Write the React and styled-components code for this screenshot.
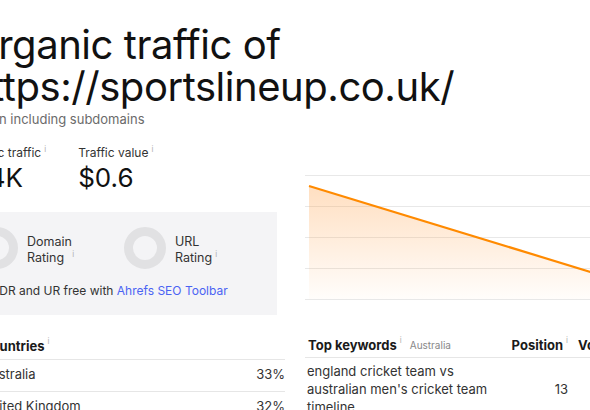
import React from "react";
import styled, { createGlobalStyle } from "styled-components";

const Global = createGlobalStyle`
  html, body { margin: 0; padding: 0; background: #fff; overflow: hidden; }
  body { font-family: Inter, "Noto Sans", "Liberation Sans", sans-serif; color: #1a1a1a; }
  * { box-sizing: border-box; }
`;

const Page = styled.div`
  margin-left: -40px;
  width: 670px;
  padding-top: 24px;
`;

const Title = styled.h1`
  margin: 0 0 0 8px;
  font-size: 40px;
  line-height: 42px;
  font-weight: 400;
  color: #111;
  letter-spacing: -0.45px;
`;

const Subtitle = styled.div`
  margin-top: 2px;
  font-size: 13px;
  line-height: 18px;
  color: #6b6b6b;
`;

const Grid = styled.div`
  display: grid;
  grid-template-columns: 325px 325px;
  column-gap: 20px;
`;

const Metrics = styled.div`
  display: flex;
  gap: 32px;
  margin-top: 17px;
`;

const Metric = styled.div`
  display: flex;
  flex-direction: column;
`;

const Label = styled.div`
  font-size: 12px;
  line-height: 16px;
  color: #333;
`;

const Info = styled.span`
  display: inline-block;
  font-size: 8px;
  line-height: 8px;
  color: #b0b0b0;
  position: relative;
  top: -5px;
  margin-left: ${p => p.$gap || 3}px;
  font-weight: 400;
`;

const Value = styled.div`
  margin-top: 2px;
  font-size: 26px;
  line-height: 30px;
  color: #111;
`;

const RatingBox = styled.div`
  margin-top: 19px;
  width: 317px;
  background: #f4f4f6;
  padding: 15px 16px 16px;
`;

const Ratings = styled.div`
  display: flex;
`;

const Rating = styled.div`
  display: flex;
  align-items: center;
  gap: 9px;
  width: 148px;
  flex: none;
`;

const Ring = styled.div`
  width: 42px;
  height: 42px;
  border-radius: 50%;
  border: 9px solid #e1e1e3;
  flex: none;
`;

const RatingText = styled.div`
  padding-top: 4px;
  font-size: 12.5px;
  line-height: 16px;
  color: #333;
`;

const Note = styled.div`
  margin-top: 14px;
  font-size: 12px;
  line-height: 16px;
  color: #333;
`;

const Link = styled.a`
  color: #4a63f3;
  text-decoration: none;
`;

const ChartWrap = styled.div`
  margin-top: 47px;
  height: 125px;
`;

const Table = styled.div`
  margin-top: 20px;
  margin-left: ${p => p.$indent || 0}px;
  display: grid;
  grid-template-columns: ${p => p.$cols};
`;

const Head = styled.div`
  font-size: 13px;
  line-height: 18px;
  font-weight: 700;
  color: #1a1a1a;
  padding: 1px ${p => p.$pr || 0}px 3px ${p => p.$pl || 0}px;
  border-bottom: 1px solid #e6e6e6;
  white-space: nowrap;
  display: flex;
  align-items: center;
  justify-content: ${p => (p.$align === "right" ? "flex-end" : "flex-start")};
`;

const Tag = styled.span`
  font-size: 10px;
  font-weight: 400;
  color: #888;
  margin-left: 8px;
`;

const Cell = styled.div`
  font-size: 13px;
  line-height: 18px;
  color: #333;
  padding: 4px ${p => p.$pr || 0}px 7px ${p => p.$pl || 0}px;
  border-bottom: 1px solid #e6e6e6;
  display: flex;
  align-items: center;
  justify-content: ${p => (p.$align === "right" ? "flex-end" : "flex-start")};
`;

const I = ({ gap }) => <Info $gap={gap}>i</Info>;

function Chart() {
  return (
    <svg width="325" height="125" viewBox="0 0 325 125">
      <defs>
        <linearGradient id="fill" x1="0" y1="0" x2="0" y2="1">
          <stop offset="0" stopColor="#ff9a3c" stopOpacity="0.32" />
          <stop offset="1" stopColor="#ff9a3c" stopOpacity="0.02" />
        </linearGradient>
      </defs>
      {[0.5, 31.5, 62.5, 93.5, 124.5].map(y => (
        <line key={y} x1="0" x2="325" y1={y} y2={y} stroke="#e8e8e8" strokeWidth="1" />
      ))}
      <path d="M4 11 L325 109 L325 124 L4 124 Z" fill="url(#fill)" />
      <path d="M4 11 L325 109" stroke="#ff8a00" strokeWidth="2.2" fill="none" />
    </svg>
  );
}

export default function App() {
  return (
    <>
      <Global />
      <Page>
        <Title>
          Organic traffic of
          <br />
          https://sportslineup.co.uk/
        </Title>
        <Subtitle>Domain including subdomains</Subtitle>
        <Grid>
          <div>
            <Metrics>
              <Metric>
                <Label>
                  Organic traffic<I />
                </Label>
                <Value>11.4K</Value>
              </Metric>
              <Metric>
                <Label>
                  Traffic value<I />
                </Label>
                <Value>$0.6</Value>
              </Metric>
            </Metrics>
            <RatingBox>
              <Ratings>
                <Rating>
                  <Ring />
                  <RatingText>
                    Domain
                    <br />
                    Rating<I gap={8} />
                  </RatingText>
                </Rating>
                <Rating>
                  <Ring />
                  <RatingText>
                    URL
                    <br />
                    Rating<I />
                  </RatingText>
                </Rating>
              </Ratings>
              <Note>
                Get DR and UR free with <Link href="#">Ahrefs SEO Toolbar</Link>
              </Note>
            </RatingBox>
          </div>
          <ChartWrap>
            <Chart />
          </ChartWrap>

          <Table $cols="1fr auto" $indent={22}>
            <Head>
              Countries<I />
            </Head>
            <Head />
            <Cell>Australia</Cell>
            <Cell $align="right">33%</Cell>
            <Cell>United Kingdom</Cell>
            <Cell $align="right">32%</Cell>
          </Table>
          <Table $cols="197px 66px 1fr">
            <Head $pl={3}>
              Top keywords<I />
              <Tag>Australia</Tag>
            </Head>
            <Head $align="right">
              Position<I />
            </Head>
            <Head $pl={10}>Volume</Head>
            <Cell $pl={2}>england cricket team vs australian men's cricket team timeline</Cell>
            <Cell $align="right">13</Cell>
            <Cell $align="right">90</Cell>
          </Table>
        </Grid>
      </Page>
    </>
  );
}
